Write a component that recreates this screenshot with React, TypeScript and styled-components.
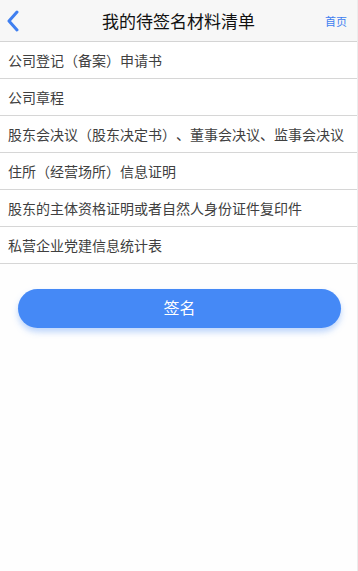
import React from "react";
import styled, { createGlobalStyle } from "styled-components";

const Global = createGlobalStyle`
  html, body { margin: 0; padding: 0; background: #ffffff; }
  body {
    font-family: "Noto Sans CJK SC", "Noto Sans", sans-serif;
    text-spacing-trim: space-all;
  }
`;

const Page = styled.div`
  width: 357px;
  min-height: 571px;
  background: #fefefe;
  border-right: 1px solid #ececec;
  display: flex;
  flex-direction: column;
`;

const Header = styled.header`
  height: 41px;
  background: #f7f7f7;
  border-bottom: 1px solid #d4d4d4;
  display: grid;
  grid-template-columns: 60px 1fr 60px;
  align-items: center;
`;

const Back = styled.button`
  border: 0;
  background: none;
  padding: 0 0 0 6px;
  height: 41px;
  display: flex;
  align-items: center;
  justify-self: start;
`;

const Title = styled.h1`
  margin: 0;
  font-size: 17px;
  font-weight: 400;
  color: #111;
  text-align: center;
  line-height: 41px;
`;

const Home = styled.span`
  justify-self: end;
  padding-right: 10px;
  font-size: 11px;
  color: #3f7ff0;
`;

const List = styled.ul`
  list-style: none;
  margin: 0;
  padding: 0;
`;

const Row = styled.li`
  height: 36px;
  display: flex;
  align-items: center;
  padding-left: 8px;
  background: #fff;
  border-bottom: 1px solid #d6d6d6;
  font-size: 14px;
  color: #404040;
  white-space: nowrap;
  text-spacing-trim: space-all;
`;

const ButtonWrap = styled.div`
  padding: 25px 16px 0 18px;
`;

const SignButton = styled.button`
  width: 100%;
  height: 39px;
  border: 0;
  border-radius: 20px;
  background: #4589f6;
  color: #fff;
  font-family: inherit;
  font-size: 16px;
  line-height: 37px;
  padding: 0 0 2px;
  box-shadow: 0 4px 6px rgba(69, 137, 246, 0.35);
`;

const items = [
  "公司登记（备案）申请书",
  "公司章程",
  "股东会决议（股东决定书）、董事会决议、监事会决议",
  "住所（经营场所）信息证明",
  "股东的主体资格证明或者自然人身份证件复印件",
  "私营企业党建信息统计表",
];

export default function App() {
  return (
    <>
      <Global />
      <Page>
        <Header>
          <Back aria-label="返回">
            <svg width="14" height="22" viewBox="0 0 14 22">
              <path d="M11 2 L3 11 L11 20" fill="none" stroke="#3f7ff0" strokeWidth="3" strokeLinecap="round" strokeLinejoin="round" />
            </svg>
          </Back>
          <Title>我的待签名材料清单</Title>
          <Home>首页</Home>
        </Header>
        <List>
          {items.map((t) => (
            <Row key={t}>{t}</Row>
          ))}
        </List>
        <ButtonWrap>
          <SignButton>签名</SignButton>
        </ButtonWrap>
      </Page>
    </>
  );
}
